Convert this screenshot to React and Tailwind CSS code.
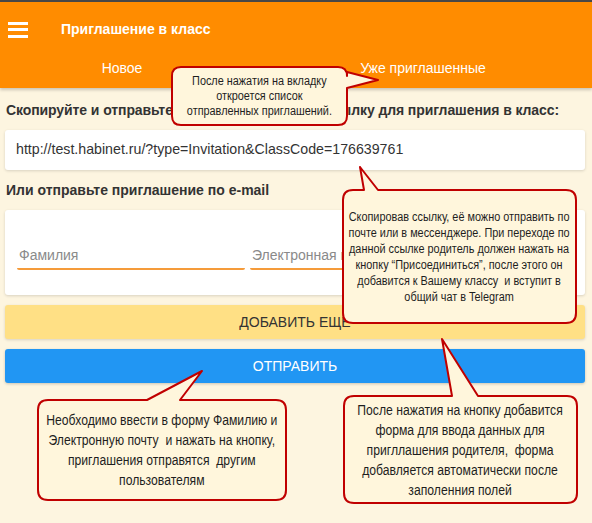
import { Fragment } from 'react'

const RED = '#c00000'
const FILL = '#fff6dc'

// Callout outline: rounded box with a pointed tail
function calloutPath({ x0, y0, x1, y1, r, tail }) {
  const t = tail
  if (t.side === 'top') {
    return `M ${x0 + r} ${y0} L ${t.a} ${y0} L ${t.tx} ${t.ty} L ${t.b} ${y0} L ${x1 - r} ${y0} Q ${x1} ${y0} ${x1} ${y0 + r} L ${x1} ${y1 - r} Q ${x1} ${y1} ${x1 - r} ${y1} L ${x0 + r} ${y1} Q ${x0} ${y1} ${x0} ${y1 - r} L ${x0} ${y0 + r} Q ${x0} ${y0} ${x0 + r} ${y0} Z`
  }
  // tail on the right side
  return `M ${x0 + r} ${y0} L ${x1 - r} ${y0} Q ${x1} ${y0} ${x1} ${y0 + r} L ${x1} ${t.a} L ${t.tx} ${t.ty} L ${x1} ${t.b} L ${x1} ${y1 - r} Q ${x1} ${y1} ${x1 - r} ${y1} L ${x0 + r} ${y1} Q ${x0} ${y1} ${x0} ${y1 - r} L ${x0} ${y0 + r} Q ${x0} ${y0} ${x0 + r} ${y0} Z`
}

const callouts = [
  { x0: 172, y0: 67, x1: 347, y1: 125, r: 9, tail: { side: 'right', a: 72, b: 88, tx: 378, ty: 80 } },
  { x0: 343, y0: 190, x1: 576, y1: 323, r: 10, tail: { side: 'top', a: 364, b: 378, tx: 360, ty: 167 } },
  { x0: 38, y0: 400, x1: 286, y1: 500, r: 10, tail: { side: 'top', a: 147, b: 180, tx: 202, ty: 371 } },
  { x0: 344, y0: 396, x1: 577, y1: 503, r: 10, tail: { side: 'top', a: 452, b: 478, tx: 442, ty: 339 } },
]

function Lines({ lines }) {
  return (
    <p className="scale-x-[0.87] whitespace-pre">
      {lines.map((l, i) => (
        <Fragment key={i}>
          {i > 0 && <br />}
          {l}
        </Fragment>
      ))}
    </p>
  )
}

export default function App() {
  return (
    <div
      className="relative min-h-[523px] w-[592px] overflow-hidden bg-[#fdf5e0] text-[#333]"
      style={{ fontFamily: '"Liberation Sans", Arial, sans-serif' }}
    >
      {/* Шапка */}
      <header className="border-t-2 border-[#474747] bg-[#ff8c00] text-white shadow-[0_2px_3px_rgba(0,0,0,0.2)]">
        <div className="flex h-[55px] items-center">
          <div className="ml-[8px] flex w-[20px] flex-col gap-[3.5px]">
            <span className="h-[3px] bg-white" />
            <span className="h-[3px] bg-white" />
            <span className="h-[3px] bg-white" />
          </div>
          <h1 className="ml-[33px] text-[14px] font-bold">Приглашение в класс</h1>
        </div>
        <div className="flex h-[31px] pt-[3px] text-[14px] leading-[16px]">
          <div className="w-[244px] text-center">Новое</div>
          <div className="ml-[29px] w-[300px] text-center">Уже приглашенные</div>
        </div>
      </header>

      <main className="ml-[5px] mr-[7px]">
        <h2 className="ml-px mt-[12px] whitespace-nowrap text-[14px] font-bold leading-[20px] tracking-[-0.09px]">
          Скопируйте и отправьте родителям учеников ссылку для приглашения в класс:
        </h2>
        <div className="mt-[10px] flex h-[40px] items-center rounded-[3px] bg-white px-[11px] text-[14.2px] shadow-[0_1px_3px_rgba(0,0,0,0.15)]">
          http://test.habinet.ru/?type=Invitation&amp;ClassCode=176639761
        </div>

        <h2 className="ml-px mt-[10px] text-[14px] font-bold leading-[20px]">
          Или отправьте приглашение по e-mail
        </h2>
        <div className="mt-[10px] flex h-[85px] gap-[5px] rounded-[3px] bg-white px-[12px] pt-[31px] shadow-[0_1px_3px_rgba(0,0,0,0.15)]">
          <input
            placeholder="Фамилия"
            className="h-[29px] w-[228px] rounded-b-[2px] border-b-2 border-[#f59b3a] bg-transparent px-[2px] text-[14px] outline-none placeholder:text-[#8a8a8a]"
          />
          <input
            placeholder="Электронная почта"
            className="h-[29px] w-[228px] rounded-b-[2px] border-b-2 border-[#f59b3a] bg-transparent px-[2px] text-[14px] outline-none placeholder:text-[#8a8a8a]"
          />
        </div>

        <button className="mt-[10px] flex h-[34px] w-full items-center justify-center rounded-[3px] bg-[#ffe085] text-[14px] uppercase text-[#333] shadow-[0_1px_3px_rgba(0,0,0,0.15)]">
          Добавить еще
        </button>
        <button className="mt-[10px] flex h-[34px] w-full items-center justify-center rounded-[3px] bg-[#2196f3] text-[14px] uppercase text-white shadow-[0_1px_3px_rgba(0,0,0,0.2)]">
          Отправить
        </button>
      </main>

      {/* Выноски-подсказки поверх страницы */}
      <svg className="pointer-events-none absolute left-0 top-0" width="592" height="523">
        {callouts.map((c, i) => (
          <path key={i} d={calloutPath(c)} fill={FILL} stroke={RED} strokeWidth="2" strokeLinejoin="round" />
        ))}
      </svg>

      <div className="pointer-events-none absolute inset-0 text-center text-[#1e1e1e]">
        <div className="absolute left-[172px] top-[67px] flex h-[58px] w-[175px] items-center justify-center text-[12.5px] leading-[15px]">
          <Lines lines={['После нажатия на вкладку', 'откроется список', 'отправленных приглашений.']} />
        </div>
        <div className="absolute left-[343px] top-[190px] flex h-[133px] w-[233px] items-center justify-center text-[12.5px] leading-[16px]">
          <Lines
            lines={[
              'Скопировав ссылку, её можно отправить по',
              'почте или в мессенджере. При переходе по',
              'данной ссылке родитель должен нажать на',
              'кнопку “Присоединиться”, после этого он',
              'добавится к Вашему классу  и вступит в',
              'общий чат в Telegram',
            ]}
          />
        </div>
        <div className="absolute left-[38px] top-[400px] flex h-[100px] w-[248px] items-center justify-center text-[14px] leading-[20px]">
          <Lines
            lines={[
              'Необходимо ввести в форму Фамилию и',
              'Электронную почту  и нажать на кнопку,',
              'приглашения отправятся  другим',
              'пользователям',
            ]}
          />
        </div>
        <div className="absolute left-[344px] top-[396px] flex h-[107px] w-[233px] items-center justify-center text-[14px] leading-[20px]">
          <Lines
            lines={[
              'После нажатия на кнопку добавится',
              'форма для ввода данных для',
              'пригллашения родителя,  форма',
              'добавляется автоматически после',
              'заполенния полей',
            ]}
          />
        </div>
      </div>
    </div>
  )
}
